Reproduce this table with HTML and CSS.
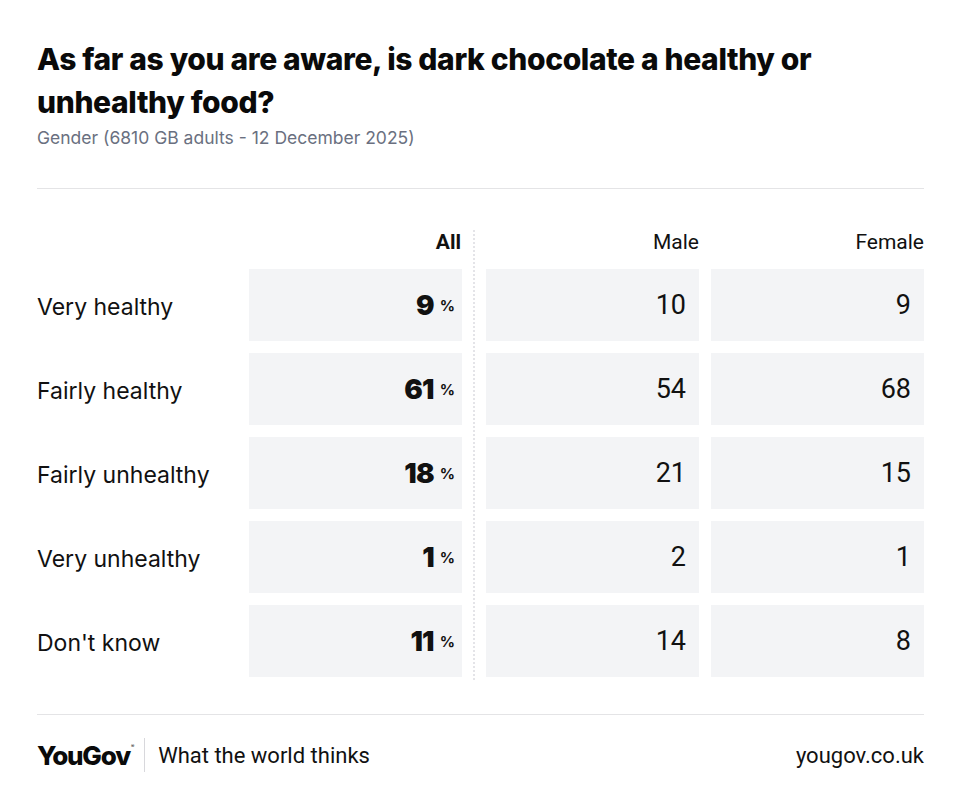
FILE: index.html
```html
<!DOCTYPE html>
<html>
<head>
<meta charset="utf-8">
<link rel="stylesheet" href="styles.css">
</head>
<body>
<div class="page">
  <header class="head">
    <h1 class="title">As far as you are aware, is dark chocolate a healthy or unhealthy food?</h1>
    <p class="sub">Gender (6810 GB adults - 12 December 2025)</p>
  </header>
  <div class="rule"></div>
  <div class="table">
    <div class="hlabel"></div>
    <div class="hcell all">All</div>
    <div class="sep"></div>
    <div class="hcell">Male</div>
    <div class="hcell fem">Female</div>

    <div class="label">Very healthy</div>
    <div class="cell all">9<span class="pct">%</span></div>
    <div class="cell">10</div>
    <div class="cell fem">9</div>

    <div class="label">Fairly healthy</div>
    <div class="cell all">61<span class="pct">%</span></div>
    <div class="cell">54</div>
    <div class="cell fem">68</div>

    <div class="label">Fairly unhealthy</div>
    <div class="cell all">18<span class="pct">%</span></div>
    <div class="cell">21</div>
    <div class="cell fem">15</div>

    <div class="label">Very unhealthy</div>
    <div class="cell all">1<span class="pct">%</span></div>
    <div class="cell">2</div>
    <div class="cell fem">1</div>

    <div class="label">Don't know</div>
    <div class="cell all">11<span class="pct">%</span></div>
    <div class="cell">14</div>
    <div class="cell fem">8</div>
  </div>
  <div class="rule foot-rule"></div>
  <footer class="foot">
    <div class="brand">
      <span class="logo">YouGov<sup class="reg">®</sup></span>
      <span class="vbar"></span>
      <span class="tag">What the world thinks</span>
    </div>
    <span class="site">yougov.co.uk</span>
  </footer>
</div>
</body>
</html>
```

FILE: styles.css
```css
html, body {
  margin: 0;
  padding: 0;
  background: #ffffff;
}
body {
  font-family: Roboto, "Liberation Sans", sans-serif;
  color: #111;
}
.page {
  width: 887px;
  padding: 0 36px 0 37px;
}
.head {
  padding-top: 38px;
}
.title {
  margin: 0;
  max-width: 790px;
  font-family: Inter, "Liberation Sans", sans-serif;
  font-weight: 800;
  font-size: 30px;
  line-height: 43px;
  letter-spacing: -0.36px;
  color: #0a0a0a;
}
.sub {
  margin: 2px 0 0 0;
  font-family: Inter, sans-serif;
  font-size: 17.5px;
  line-height: 24px;
  color: #6a7080;
}
.rule {
  height: 1px;
  background: #e4e4e6;
  margin-top: 38px;
}
.table {
  display: grid;
  grid-template-columns: 212px 213px 24px 213px 225px;
  grid-template-rows: 25px repeat(5, 72px);
  row-gap: 12px;
  margin-top: 43px;
}
.sep {
  grid-row: 1 / span 6;
  grid-column: 3;
  justify-self: center;
  width: 0;
  border-left: 2px dotted #e4e4e8;
  margin-top: -2px;
  margin-bottom: -3px;
}
.hcell {
  text-align: right;
  font-size: 21px;
  line-height: 20px;
  color: #111;
  font-weight: 400;
}
.hcell.all {
  font-weight: 700;
  padding-right: 1px;
}
.label {
  display: flex;
  align-items: center;
  font-family: Inter, sans-serif;
  font-size: 23px;
  color: #111;
  padding-top: 3px;
}
.cell {
  background: #f3f4f6;
  display: flex;
  align-items: center;
  justify-content: flex-end;
  padding-right: 13px;
  font-size: 27px;
  font-weight: 400;
  color: #111;
}
.fem {
  margin-left: 12px;
}
.cell.all {
  font-weight: 900;
  font-family: Inter, sans-serif;
  font-size: 27.5px;
  letter-spacing: -0.8px;
  padding-right: 7px;
}
.pct {
  font-size: 15px;
  font-weight: 700;
  margin-left: 6px;
  position: relative;
  top: 0;
  letter-spacing: 0;
}
.foot-rule {
  margin-top: 37px;
}
.foot {
  display: flex;
  align-items: center;
  justify-content: space-between;
  height: 80px;
}
.brand {
  display: flex;
  align-items: center;
}
.logo {
  font-family: Inter, sans-serif;
  font-weight: 800;
  font-size: 26px;
  letter-spacing: -1.2px;
  color: #0a0a0a;
}
.reg {
  font-size: 5px;
  font-weight: 400;
  vertical-align: top;
  position: relative;
  top: 3px;
  margin-left: 1px;
}
.vbar {
  width: 1px;
  height: 34px;
  background: #d8d8dc;
  margin: 0 13px 0 11px;
}
.tag {
  font-size: 22px;
  color: #111;
}
.site {
  font-size: 22px;
  color: #111;
}
```
